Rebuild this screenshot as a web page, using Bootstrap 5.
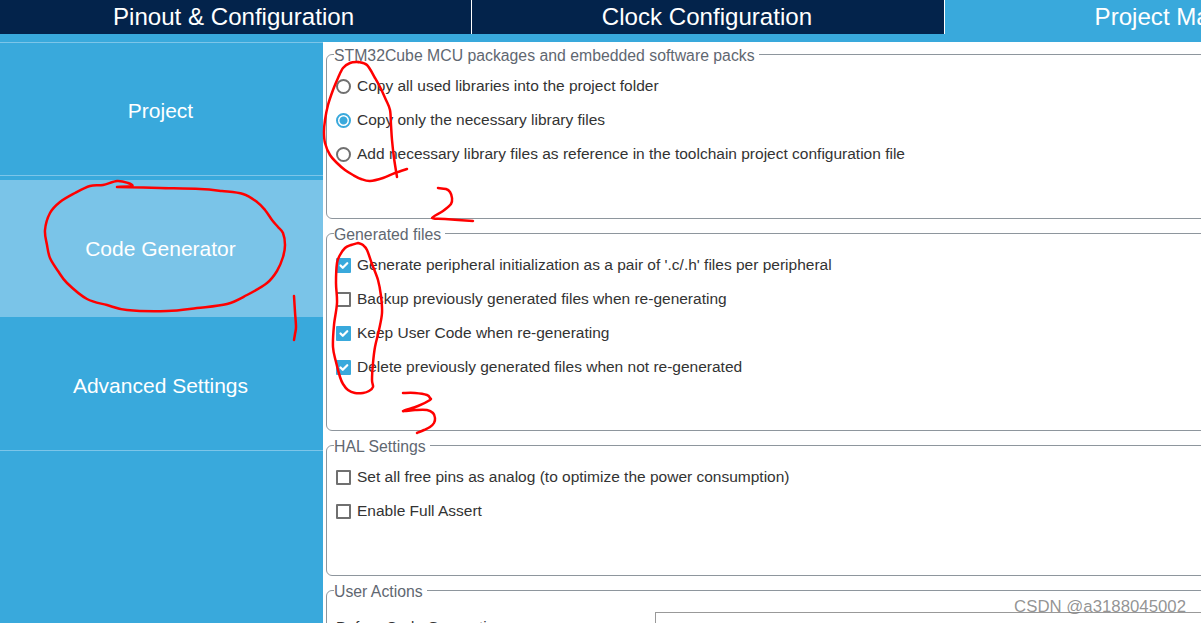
<!DOCTYPE html>
<html lang="en">

<head>
    <meta charset="UTF-8">
    <meta name="viewport" content="width=device-width, initial-scale=1.0">
    <link href="https://cdn.jsdelivr.net/npm/bootstrap@5.3.1/dist/css/bootstrap.min.css" rel="stylesheet">
    <title>Project Manager - Code Generator</title>

    <style>
        body {
            font-family: "Liberation Sans", Arial, sans-serif;
            font-size: 15.5px;
            color: #333;
            height: 623px;
            overflow: hidden;
            position: relative;
        }

        .top-tabs {
            height: 42px;
            background-color: #39a9dc;
            overflow: hidden;
        }

        .top-tab {
            flex: 0 0 auto;
            height: 34px;
            font-size: 24.1px;
            line-height: 34px;
            text-align: center;
            color: #fff;
            background-color: #03234b;
            border-right: 1px solid #fff;
        }

        .tab-pinout { width: 472px; padding-right: 4px; }
        .tab-clock { width: 473px; padding-right: 2px; }

        .top-tab.is-current {
            width: 476px;
            height: 42px;
            background-color: #39a9dc;
            border-right: 0;
        }

        .content-row {
            height: 581px;
        }

        .side-menu {
            flex: 0 0 323px;
            background-color: #39a9dc;
        }

        .side-item {
            font-size: 21px;
            color: #fff;
            padding-right: 2px;
            border-top: 1px solid #7cc5e9;
        }

        .side-project { height: 133px; padding-top: 4px; }
        .side-spacer { height: 5px; background-color: #39a9dc; }
        .side-code { height: 137px; background-color: #7ac4e8; border-top: 0; }
        .side-advanced { height: 134px; padding-top: 5px; border-top: 0; border-bottom: 1px solid #7cc5e9; }

        .main-area {
            padding: 2px 0 0 3px;
            min-width: 0;
            overflow: hidden;
        }

        .group-box {
            width: 1000px;
            flex-shrink: 0;
            padding: 0 0 0 9px;
            border: 1px solid #8e969d;
            border-radius: 6px;
            margin: 0;
        }

        .group-box legend {
            float: none;
            width: auto;
            font-size: 15.8px;
            line-height: 18px;
            padding: 3px 4px 0 0;
            margin: 0 0 0 -2px;
            color: #5f6771;
        }

        .group-packs { height: 175px; }
        .group-files { height: 208px; }
        .group-hal { height: 141px; }
        .group-actions { height: 200px; }

        .group-rows {
            margin-top: 4px;
        }

        .option-row {
            height: 34px;
            min-height: 0;
            margin: 0;
            padding: 0;
            gap: 6px;
        }

        .option-row .form-check-input {
            width: 15px;
            height: 15px;
            margin: 0;
            float: none;
            flex-shrink: 0;
            border: 2px solid #707070;
        }

        .option-row .form-check-input[type=checkbox] {
            border-radius: 1px;
        }

        .option-row .form-check-input[type=checkbox]:checked {
            background-color: #39a9dc;
            border-width: 0;
        }

        .option-row .form-check-input[type=radio]:checked {
            background-color: #fff;
            background-image: radial-gradient(circle, #39a9dc 0 3.5px, #fff 4.5px);
            border-color: #39a9dc;
        }

        .option-row .form-check-label {
            opacity: 1;
            color: #333;
        }

        .action-row {
            margin-top: 11px;
        }

        .action-label {
            flex: 0 0 319px;
            padding-top: 3px;
        }

        .action-field {
            width: 600px;
            height: 40px;
            border: 1px solid #999;
        }

        .ink-layer {
            position: absolute;
            left: 0;
            top: 0;
            pointer-events: none;
        }

        .ink-layer path {
            fill: none;
            stroke: #f00;
            stroke-width: 2.5;
            stroke-linecap: round;
            stroke-linejoin: round;
        }

        .watermark {
            position: absolute;
            right: 15px;
            top: 598px;
            font-size: 16.8px;
            line-height: 18px;
            color: rgba(120, 120, 120, .8);
        }
    </style>
</head>

<body>
    <div class="top-tabs d-flex">
        <div class="top-tab tab-pinout">Pinout &amp; Configuration</div>
        <div class="top-tab tab-clock">Clock Configuration</div>
        <div class="top-tab is-current">Project Manager</div>
    </div>

    <div class="content-row d-flex">
        <nav class="side-menu d-flex flex-column">
            <div class="side-item side-project d-flex align-items-center justify-content-center">Project</div>
            <div class="side-item side-spacer"></div>
            <div class="side-item side-code d-flex align-items-center justify-content-center">Code Generator</div>
            <div class="side-item side-advanced d-flex align-items-center justify-content-center">Advanced Settings</div>
        </nav>

        <div class="main-area flex-grow-1 d-flex flex-column gap-1">
            <fieldset class="group-box group-packs">
                <legend>STM32Cube MCU packages and embedded software packs</legend>
                <div class="group-rows">
                    <label class="option-row form-check d-flex align-items-center">
                        <input class="form-check-input" type="radio" name="packs">
                        <span class="form-check-label">Copy all used libraries into the project folder</span>
                    </label>
                    <label class="option-row form-check d-flex align-items-center">
                        <input class="form-check-input" type="radio" name="packs" checked>
                        <span class="form-check-label">Copy only the necessary library files</span>
                    </label>
                    <label class="option-row form-check d-flex align-items-center">
                        <input class="form-check-input" type="radio" name="packs">
                        <span class="form-check-label">Add necessary library files as reference in the toolchain project configuration file</span>
                    </label>
                </div>
            </fieldset>

            <fieldset class="group-box group-files">
                <legend>Generated files</legend>
                <div class="group-rows">
                    <label class="option-row form-check d-flex align-items-center">
                        <input class="form-check-input" type="checkbox" checked>
                        <span class="form-check-label">Generate peripheral initialization as a pair of '.c/.h' files per peripheral</span>
                    </label>
                    <label class="option-row form-check d-flex align-items-center">
                        <input class="form-check-input" type="checkbox">
                        <span class="form-check-label">Backup previously generated files when re-generating</span>
                    </label>
                    <label class="option-row form-check d-flex align-items-center">
                        <input class="form-check-input" type="checkbox" checked>
                        <span class="form-check-label">Keep User Code when re-generating</span>
                    </label>
                    <label class="option-row form-check d-flex align-items-center">
                        <input class="form-check-input" type="checkbox" checked>
                        <span class="form-check-label">Delete previously generated files when not re-generated</span>
                    </label>
                </div>
            </fieldset>

            <fieldset class="group-box group-hal">
                <legend>HAL Settings</legend>
                <div class="group-rows">
                    <label class="option-row form-check d-flex align-items-center">
                        <input class="form-check-input" type="checkbox">
                        <span class="form-check-label">Set all free pins as analog (to optimize the power consumption)</span>
                    </label>
                    <label class="option-row form-check d-flex align-items-center">
                        <input class="form-check-input" type="checkbox">
                        <span class="form-check-label">Enable Full Assert</span>
                    </label>
                </div>
            </fieldset>

            <fieldset class="group-box group-actions">
                <legend>User Actions</legend>
                <div class="action-row d-flex">
                    <span class="action-label">Before Code Generation</span>
                    <div class="action-field"></div>
                </div>
            </fieldset>
        </div>
    </div>

    <svg class="ink-layer" width="1201" height="623" viewBox="0 0 1201 623">
        <path data-pts="358,62 367,65 375,78 380,87 386,100 390,110 391,125 392,140 394,158 397,177"></path>
        <path data-pts="358,62 350,63 343,68 338,78 333,90 328,105 325,120 324,132 325,143 330,155 337,163 345,170 353,175 361,179 370,181 383,178 395,173 407,169"></path>
        <path data-pts="438,188 446,189 450,192 452,198 451,204 443,211 432,218 445,219 473,221"></path>
        <path data-pts="117,187 132,186 128,183 117,181 103,185 90,186 75,193 60,202 50,213 45,230 47,245 50,258 58,271 67,283 87,299 107,305 127,310 167,311 197,308 227,304 247,295 267,283 277,271 283,257 285,245 283,233 278,227 272,220 265,210 257,202 243,194 222,191 200,189 160,188 117,187"></path>
        <path data-pts="294,296 295,312 296,327 295,334 294,340"></path>
        <path data-pts="358,243 363,245 367,250 372,264 378,280 381,296 382,313 379,330 375,347 373,363 372,380 373,387 369,391 363,393 355,393 348,390 343,384 340,377 336,362 333,347 334,325 337,303 336,283 337,263 340,255 345,248 351,245 358,243"></path>
        <path data-pts="403,393 415,393 427,395 430,398 430,400 418,406 403,411 415,410 427,410 433,413 435,418 434,423 430,427 424,430 417,433"></path>
    </svg>

    <div class="watermark">CSDN @a3188045002</div>

    <script>
        // turn the traced pen points into smooth curves
        document.querySelectorAll(".ink-layer path").forEach(function (line) {
            var pts = line.dataset.pts.split(" ").map(function (p) {
                return p.split(",").map(Number);
            });
            var d = "M" + pts[0].join(" ");
            for (var i = 0; i < pts.length - 1; i++) {
                var a = pts[i - 1] || pts[i];
                var b = pts[i];
                var c = pts[i + 1];
                var e = pts[i + 2] || c;
                d += " C" + (b[0] + (c[0] - a[0]) / 6) + " " + (b[1] + (c[1] - a[1]) / 6)
                    + " " + (c[0] - (e[0] - b[0]) / 6) + " " + (c[1] - (e[1] - b[1]) / 6)
                    + " " + c[0] + " " + c[1];
            }
            line.setAttribute("d", d);
        });
    </script>

    <script src="https://cdn.jsdelivr.net/npm/bootstrap@5.3.1/dist/js/bootstrap.bundle.min.js"></script>
</body>

</html>
